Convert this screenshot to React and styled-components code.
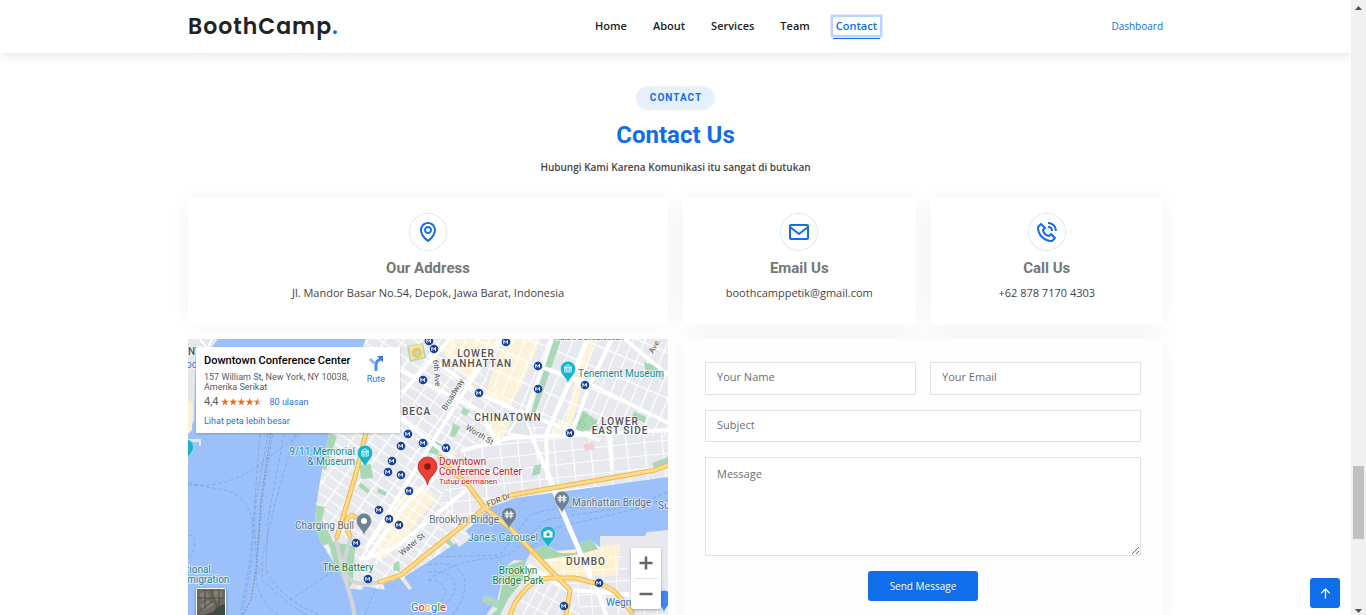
import React from 'react';
import styled, { createGlobalStyle } from 'styled-components';
import { BiMap, BiEnvelope, BiPhoneCall } from 'react-icons/bi';
import { BsArrowUpShort } from 'react-icons/bs';

const GlobalStyle = createGlobalStyle`
  * {
    box-sizing: border-box;
  }

  body {
    margin: 0;
    font-family: "Open Sans", sans-serif;
    color: #444444;
    background: #fff;
  }

  a {
    text-decoration: none;
  }
`;

/**
 * page frame
 *
 */

const Window = styled.div`
  position: relative;
  display: grid;
  grid-template-columns: 1fr 15px;
  height: 100vh;
  overflow: hidden;
`;

const Page = styled.div`
  min-width: 0;
  overflow: hidden;
`;

const Container = styled.div`
  width: 100%;
  max-width: 975px;
  margin: 0 auto;
`;

const ScrollTrack = styled.div`
  display: flex;
  flex-direction: column;
  align-items: center;
  padding: 6px 0 2px;
  background: #f1f1f1;
`;

const ScrollSpace = styled.div`
  flex: ${({ $size }) => $size} 1 0;
`;

const ScrollThumb = styled.div`
  flex: 73 1 0;
  width: 11px;
  background: #c1c1c1;
`;

const BackToTop = styled.a`
  position: absolute;
  right: 26px;
  bottom: 7px;
  display: flex;
  align-items: center;
  justify-content: center;
  width: 30px;
  height: 30px;
  border-radius: 3px;
  color: #fff;
  background: #106eea;
`;

/**
 * header
 *
 */

const Header = styled.header`
  position: relative;
  height: 53px;
  background: #fff;
  box-shadow: 0 0 11px rgba(0, 0, 0, 0.15);
`;

const HeaderInner = styled(Container)`
  display: grid;
  grid-template-columns: 1fr auto 283px;
  align-items: center;
  height: 52px;
`;

const Logo = styled.a`
  padding-top: 2px;
  font-family: Poppins, Inter, sans-serif;
  font-size: 22px;
  font-weight: 600;
  letter-spacing: 1px;
  line-height: 28px;
  color: #222222;

  & > span {
    color: #106eea;
  }
`;

const Nav = styled.nav`
  display: flex;
  gap: 20px;
`;

const NavLink = styled.a`
  position: relative;
  padding: 0 3px;
  font-size: 11px;
  font-weight: 600;
  line-height: 18px;
  color: ${({ $active }) => ($active ? '#106eea' : '#222222')};
  box-shadow: ${({ $active }) => ($active ? '0 0 0 2px #b9d5fa, 0 0 0 3px #e4eefd' : 'none')};

  &::after {
    content: "";
    display: ${({ $active }) => ($active ? 'block' : 'none')};
    position: absolute;
    left: 0;
    right: 0;
    bottom: -4px;
    height: 1px;
    background: #106eea;
  }
`;

const DashboardLink = styled.a`
  justify-self: end;
  font-size: 10px;
  line-height: 16px;
  color: #106eea;
`;

/**
 * section title
 *
 */

const SectionTitle = styled.div`
  display: flex;
  flex-direction: column;
  align-items: center;
  padding: 33px 0 23px;
`;

const Badge = styled.h2`
  margin: 0 0 11px;
  padding: 0 13px 0 14px;
  border-radius: 38px;
  font-family: Roboto, sans-serif;
  font-size: 10px;
  font-weight: 700;
  letter-spacing: 1px;
  line-height: 24px;
  color: #106eea;
  background: #e7f1fd;
`;

const Heading = styled.h3`
  margin: 0 0 10px;
  font-family: Roboto, sans-serif;
  font-size: 24px;
  font-weight: 700;
  line-height: 29px;
  color: #106eea;
`;

const Lead = styled.p`
  margin: 0;
  font-size: 10px;
  font-weight: 600;
  line-height: 15px;
`;

/**
 * contact grid
 *
 */

const Grid = styled.div`
  display: grid;
  grid-template-columns: repeat(4, 1fr);
  gap: 14px 15px;
`;

const InfoBox = styled.article`
  grid-column: span ${({ $span }) => $span};
  display: flex;
  flex-direction: column;
  align-items: center;
  padding: 15px 0 24px;
  background: #fff;
  box-shadow: 0 0 22px rgba(0, 0, 0, 0.05);
`;

const InfoIcon = styled.span`
  display: flex;
  align-items: center;
  justify-content: center;
  width: 38px;
  height: 38px;
  border: 1px dotted #b3d1fa;
  border-radius: 50%;
  color: #106eea;
`;

const InfoTitle = styled.h3`
  margin: 8px 0 7px;
  font-family: Roboto, sans-serif;
  font-size: 15px;
  font-weight: 700;
  line-height: 18px;
  color: #777777;
`;

const InfoText = styled.p`
  margin: 0;
  font-size: 11px;
  line-height: 17px;
`;

/**
 * map
 *
 */

const MapBox = styled.section`
  grid-column: span 2;
  position: relative;
  height: 288px;
  overflow: hidden;
  font-family: Roboto, sans-serif;
`;

const MapCanvas = styled.svg`
  display: block;
  width: 100%;
  height: 100%;
  font-family: Roboto, sans-serif;
`;

const PlaceCard = styled.div`
  position: absolute;
  top: 8px;
  left: 8px;
  display: flex;
  justify-content: space-between;
  width: 204px;
  height: 86px;
  padding: 7px 15px 0 8px;
  background: #fff;
  box-shadow: 0 1px 2px rgba(0, 0, 0, 0.2);
  font-size: 9px;
  line-height: 10px;
  color: #5b5b5b;
`;

const PlaceInfo = styled.div`
  width: 146px;
`;

const PlaceName = styled.strong`
  display: block;
  margin-bottom: 5px;
  font-size: 11px;
  font-weight: 500;
  line-height: 13px;
  white-space: nowrap;
  color: #000;
`;

const Rating = styled.div`
  display: flex;
  align-items: center;
  margin: 3px 0 7px;
  font-size: 11px;
  line-height: 13px;

  & > svg {
    margin: 0 8px 0 2px;
  }
`;

const MapLink = styled.a`
  font-size: 9px;
  line-height: 12px;
  color: #1a73e8;
`;

const Directions = styled.a`
  display: flex;
  flex-direction: column;
  align-items: center;
  gap: 3px;
  padding-top: 2px;
  font-size: 9px;
  line-height: 11px;
  color: #1a73e8;
`;

const ZoomControl = styled.div`
  position: absolute;
  right: 7px;
  bottom: 18px;
  width: 30px;
  padding: 0 3px;
  border-radius: 2px;
  background: #fff;
  box-shadow: 0 1px 3px rgba(0, 0, 0, 0.3);
`;

const ZoomButton = styled.button`
  display: flex;
  align-items: center;
  justify-content: center;
  width: 24px;
  height: 30px;
  padding: 0;
  border: 0;
  background: none;

  & + & {
    height: 31px;
    border-top: 1px solid #e6e6e6;
  }
`;

const SatelliteButton = styled.button`
  position: absolute;
  left: 8px;
  bottom: 9px;
  width: 30px;
  height: 30px;
  padding: 0;
  border: 1px solid #fff;
  border-radius: 2px;
  overflow: hidden;
  background: #3c4a43;
  box-shadow: 0 1px 3px rgba(0, 0, 0, 0.4);
`;

/**
 * form
 *
 */

const Form = styled.form`
  grid-column: span 2;
  display: grid;
  grid-template-columns: 1fr 1fr;
  align-content: start;
  gap: 15px 14px;
  padding: 23px 22px;
  background: #fefefe;
  box-shadow: 0 0 22px rgba(0, 0, 0, 0.05);
`;

const Field = styled.input`
  grid-column: span ${({ $span }) => $span || 1};
  width: 100%;
  height: ${({ $span }) => ($span ? 32 : 33)}px;
  padding: 0 11px 4px;
  border: 1px solid #dee2e6;
  border-radius: 0;
  font-family: "Open Sans", sans-serif;
  font-size: 11px;
  background: #fff;

  &::placeholder {
    color: #6c6f73;
  }
`;

const MessageField = styled.textarea`
  grid-column: span 2;
  display: block;
  height: 99px;
  padding: 7px 11px;
  border: 1px solid #dee2e6;
  border-radius: 0;
  font-family: "Open Sans", sans-serif;
  font-size: 11px;
  line-height: 17px;
  background: #fff;

  &::placeholder {
    color: #6c6f73;
  }
`;

const SendButton = styled.button`
  grid-column: span 2;
  justify-self: center;
  width: 110px;
  height: 30px;
  padding: 0;
  border: 0;
  border-radius: 3px;
  font-family: "Open Sans", sans-serif;
  font-size: 10px;
  color: #fff;
  background: #106eea;
`;

const navItems = ['Home', 'About', 'Services', 'Team', 'Contact'];

const contacts = [
  { title: 'Our Address', text: 'Jl. Mandor Basar No.54, Depok, Jawa Barat, Indonesia', icon: BiMap, span: 2 },
  { title: 'Email Us', text: 'boothcamppetik@gmail.com', icon: BiEnvelope, span: 1 },
  { title: 'Call Us', text: '+62 878 7170 4303', icon: BiPhoneCall, span: 1 },
];

const stations = [
  [423, 380], [408, 434], [401, 446], [423, 443], [392, 461], [388, 472], [401, 475],
  [434, 349], [429, 341], [506, 342], [538, 366], [585, 385], [538, 389], [479, 393],
  [570, 433], [446, 448], [409, 491], [379, 510], [389, 519], [399, 525], [356, 543],
  [368, 579], [599, 583], [564, 606],
];

const whiteRoads = [
  'M428 355L478 393L521 413L600 440',
  'M500 339L474 376L440 430L405 486L366 548',
  'M538 366L588 383L668 423',
  'M588 339L575 371L546 435L548 480',
  'M461 451L508 438L571 435L668 430',
  'M525 421L552 484',
  'M400 418L440 449L470 470',
  'M400 370L478 410L500 445',
  'M440 470L405 505L366 560',
  'M360 560L395 548L470 487',
  'M525 418L552 339',
  'M403 392L450 339',
  'M571 435L590 384L612 339',
  'M625 339L640 352L668 375',
  'M610 432L612 470',
  'M570 590L600 592L668 600',
  'M528 565L570 592',
  'M595 582L606 615',
];

const ferries = [
  'M188 485C215 488 240 478 252 470L300 434',
  'M268 434L256 500L252 560L240 627',
  'M273 434L262 500L256 580C262 610 280 617 300 627',
  'M284 434L268 520L266 570C280 600 310 612 350 627',
  'M295 434L276 500L262 560L262 580C290 605 300 615 335 627',
  'M290 600L332 572M188 483L228 491C250 498 256 520 256 560',
  'M188 535C200 535 194 555 188 556M260 434L250 560L238 627',
  'M428 580C470 550 500 565 515 550L545 520L668 500',
  'M428 557L500 555L530 515C570 500 620 515 668 492',
  'M428 565C475 555 475 600 440 627M428 572C464 568 464 600 428 615M360 627L375 590',
  'M428 580C452 580 450 605 428 605M470 627L505 590M530 548L555 528L640 508',
];

const manhattan = `M366 339L345 395L329 433L321 475L316 507L315 526L321 542L335 565L348 588
  L362 590L364 586L385 590L383 584L400 578L409 590L412 588L404 577L428 562L456 543L459 547L466 542
  L471 537L466 531L491 507L515 498L581 489L668 477V339Z`;

const brooklyn = `M478 627L497 600L506 566L514 560L526 561L531 552L545 545L560 552L575 553L581 542L591 540
  L600 547V536H645L647 532L668 530V627Z`;

const StationMark = ({ x, y }) => (
  <g transform={`translate(${x} ${y})`}>
    <circle r="4.3" fill="#1a43a0" />
    <path d="M-2.2 1.8V-1.6L-.3 .6L1.4 -1.6V1.8" fill="none" stroke="#fff" strokeWidth="1" />
  </g>
);

const Pin = ({ x, y, color, children }) => (
  <g transform={`translate(${x} ${y})`}>
    <path
      d="M0 14.5C-1.2 8.5-7.5 6-7.5-.3A7.5 7.5 0 0 1 7.5-.3C7.5 6 1.2 8.5 0 14.5Z"
      fill={color}
      stroke="#fff"
      strokeOpacity="0.5"
      strokeWidth="0.7"
    />
    {children}
  </g>
);

const MuseumGlyph = () => (
  <path d="M-4-1.6L0-4.4L4-1.6ZM-3.2-1H3.2V3H-3.2ZM-1.600 2V0L0 1.5L1.600 0V2" fill="none" stroke="#fff" strokeWidth="0.9" />
);

const BridgeGlyph = () => (
  <path d="M-2-4V3.6M2-4V3.6M-4.5-2Q-2 0-2-3Q0 1 2-3Q2 0 4.5-2M-4.5 1H4.5" fill="none" stroke="#fff" strokeWidth="1.2" />
);

const Label = ({ x, y, size = 10, color = '#4e5156', anchor = 'start', spacing = 0, weight = 400, rotate = 0, children }) => (
  <text
    x={x}
    y={y}
    fontSize={size}
    fontWeight={weight}
    textAnchor={anchor}
    letterSpacing={spacing}
    transform={rotate ? `rotate(${rotate} ${x} ${y})` : undefined}
    fill={color}
    stroke="#fff"
    strokeOpacity="0.6"
    strokeWidth="2"
    strokeLinejoin="round"
    paintOrder="stroke"
  >
    {children}
  </text>
);

const CityMap = () => (
  <MapCanvas viewBox="188 339 480 288" preserveAspectRatio="xMidYMid slice" role="img" aria-label="Map">
    <defs>
      <pattern id="west" width="15" height="10" patternUnits="userSpaceOnUse" patternTransform="rotate(35)">
        <path d="M0 0H15M0 0V10" stroke="#fff" strokeWidth="2.6" />
      </pattern>
      <pattern id="east" width="11" height="21" patternUnits="userSpaceOnUse" patternTransform="rotate(23)">
        <path d="M0 0H11M0 0V21" stroke="#fff" strokeWidth="2.4" />
      </pattern>
      <pattern id="south" width="18" height="13" patternUnits="userSpaceOnUse" patternTransform="rotate(-6)">
        <path d="M0 0H18M0 0V13" stroke="#fff" strokeWidth="2.2" />
      </pattern>
      <pattern id="dumbo" width="13" height="12" patternUnits="userSpaceOnUse" patternTransform="rotate(-3)">
        <path d="M0 0H13M0 0V12" stroke="#fff" strokeWidth="2" />
      </pattern>
      <pattern id="heights" width="10" height="15" patternUnits="userSpaceOnUse" patternTransform="rotate(28)">
        <path d="M0 0H10M0 0V15" stroke="#fff" strokeWidth="2" />
      </pattern>
      <clipPath id="land"><path d={manhattan} /></clipPath>
      <clipPath id="landEast"><path d={brooklyn} /></clipPath>
    </defs>

    <rect x="188" y="339" width="480" height="288" fill="#9cc0f9" />

    {/* west bank */}
    <path d="M188 339H218L212 347L196 350L194 420L188 434Z" fill="#e5e7eb" />
    <path d="M188 400L193 404L192 430L188 434Z" fill="#fdf0d3" />
    <path d="M188 439H201V446H199V442H188Z" fill="#e5e7eb" />
    <path d="M200 339L206 347M212 339L208 347" stroke="#fff" strokeWidth="2" />

    <g fill="none" stroke="#79a5ea" strokeWidth="0.8" strokeDasharray="4 2">
      {ferries.map(d => <path key={d} d={d} />)}
    </g>
    <path d="M271 433L261 500L256 570L251 600L236 627" fill="none" stroke="#77818f" strokeDasharray="2 1.5" strokeWidth="0.8" />

    {/* lower manhattan */}
    <path d={manhattan} fill="#e7e9ee" />
    <g clipPath="url(#land)">
      <path d="M446 339H500L484 362L470 380L440 350ZM505 339H540L522 385L508 408L484 396Z" fill="#fdf3d9" />
      <path d="M486 412L512 418L502 440L490 444ZM404 496L424 484L436 498L400 544L380 562L372 548Z" fill="#fdf3d9" />
      <path d="M560 420L572 425L568 437L546 437ZM585 339H595L568 440L562 436Z" fill="#fdf3d9" />
      <path d="M300 339H450L520 415L462 452L420 440L380 560H300Z" fill="url(#west)" />
      <path d="M446 339H668V436L571 435L520 415Z" fill="url(#east)" />
      <path d="M462 452L520 420L571 435L668 432V490L470 540L440 500Z" fill="url(#south)" />
      <path d="M420 440L462 452L440 500L470 530L420 590H345Z" fill="url(#west)" />
      <g fill="#a8d8b4">
        <path d="M553 339L561 340L535 414L528 423ZM407 346L423 343L426 358L410 362Z" />
        <path d="M576 413L584 411L598 421L590 430L571 434ZM644 362L661 368L664 380L645 370ZM634 411L646 417L645 423L632 417Z" />
        <path d="M428 438L442 444L438 455L426 452ZM453 423L460 427L455 437L450 436ZM463 407L470 411L466 416L461 413ZM534 466L541 464L540 474L532 476Z" />
        <path d="M329 433L337 436L326 470L322 469ZM315 505L325 507L322 520L333 541L321 547L314 525ZM328 541L355 546L353 582L348 590L335 567Z" />
        <path d="M361 483L370 490L368 494L358 486ZM378 488L387 492L385 496L377 492ZM652 463L668 457V466L655 470ZM448 538L458 549L454 551L445 541ZM394 563L399 561L400 572L393 570Z" />
        <path d="M359 465L371 464L373 478L361 479Z" />
      </g>
      <path d="M409 346L422 344L424 357L411 360Z" fill="#fbe2a0" />
      <circle cx="417" cy="353" r="4" fill="#b9dcb0" stroke="#f6bf51" strokeWidth="2" />
      <path d="M583 445L592 442L595 449L585 451Z" fill="#f8cbd0" />
      <path d="M438 456L462 454L488 477L482 488L440 478Z" fill="#fbdcdc" />
      <g fill="none" stroke="#fff" strokeWidth="4">
        {whiteRoads.map(d => <path key={d} d={d} />)}
      </g>
      <path d="M508 434L522 411L533 437Z" fill="#e4e6eb" stroke="#fff" strokeWidth="2" />
      <path d="M578 424C582 417 588 424 584 427S577 421 587 415M590 420L598 425" fill="none" stroke="#8bc39b" strokeWidth="0.8" />
    </g>

    {/* brooklyn */}
    <path d={brooklyn} fill="#e7e9ee" />
    <path d="M483 595L502 601L499 609L482 602Z" fill="#b0d5c2" />
    <path d="M532 553L581 549L620 544L618 576L545 575Z" fill="#fdf1d0" />
    <g clipPath="url(#landEast)">
      <path d="M532 553L620 546L630 580L668 585V627H590L570 588Z" fill="url(#dumbo)" />
      <path d="M545 581L570 590L585 627H505L520 600Z" fill="url(#heights)" />
      <path d="M497 610L506 566L526 560L523 580L508 599L494 627H475ZM531 553L545 545L560 553L575 553L582 541L592 540L598 549L580 554L540 560Z" fill="#a5d6b1" />
      <g fill="none" stroke="#fff" strokeWidth="4">
        {whiteRoads.slice(-3).map(d => <path key={d} d={d} />)}
      </g>
    </g>

    {/* highways */}
    <g fill="none" strokeLinejoin="round" strokeLinecap="round">
      <path d="M548 474L561 508L591 578L600 595" stroke="#fff" strokeWidth="5" />
      <path d="M336 540L341 562L345 578L352 602L357 627M350 540L343 565C345 580 355 587 379 582" stroke="#d3d5da" strokeWidth="4" />
      {[['#f0b64b', 5], ['#fcdc88', 3]].map(([color, width]) => (
        <g key={color} stroke={color} strokeWidth={width}>
          <path d="M375 395L366 433L355 477L337 537" />
          <path d="M355 517C352 512 344 518 347 528L350 536" />
          <path d="M380 582L401 575L428 553L485 508L500 499L512 495L581 483L628 475L655 470L668 465" />
          <path d="M440 457L450 469L468 485L485 508L510 528L553 573L570 590L564 627" />
          <path d="M505 627L515 603C525 588 535 578 550 578L575 578L603 585C618 590 622 602 632 612" />
        </g>
      ))}
    </g>

    {stations.map(([x, y]) => <StationMark key={`${x}-${y}`} x={x} y={y} />)}

    <Label x={476} y={357} anchor="middle" weight={500} spacing={1}>LOWER</Label>
    <Label x={477} y={367} anchor="middle" weight={500} spacing={1}>MANHATTAN</Label>
    <Label x={508} y={421} anchor="middle" weight={500} spacing={1}>CHINATOWN</Label>
    <Label x={620} y={425} anchor="middle" weight={500} spacing={1}>LOWER</Label>
    <Label x={620} y={434} anchor="middle" weight={500} spacing={1}>EAST SIDE</Label>
    <Label x={402} y={415} weight={500} spacing={1}>BECA</Label>
    <Label x={586} y={565} anchor="middle" weight={500} spacing={1}>DUMBO</Label>
    <Label x={433} y={360} size={8} rotate={85}>6th Ave</Label>
    <Label x={446} y={411} size={8} rotate={-59}>Broadway</Label>
    <Label x={465} y={429} size={8} rotate={31}>Worth St</Label>
    <Label x={402} y={556} size={8} rotate={-40}>Water St</Label>
    <Label x={488} y={507} size={8} rotate={-22}>FDR Dr</Label>
    <Label x={653} y={354} size={8} rotate={-60}>Ave.</Label>
    <Label x={555} y={340} size={8}>Katz&apos;s Delicatessen</Label>
    <Label x={186} y={368} color="#2f73d8">od</Label>
    <Label x={188} y={355} weight={500}>NT</Label>

    <Label x={578} y={377} color="#168a99">Tenement Museum</Label>
    <Label x={355} y={455} anchor="end" color="#168a99">9/11 Memorial</Label>
    <Label x={355} y={465} anchor="end" color="#168a99">&amp; Museum</Label>
    <Label x={538} y={541} anchor="end" color="#168a99">Jane&apos;s Carousel</Label>
    <Label x={186} y={573} color="#168a99">tional</Label>
    <Label x={187} y={583} color="#168a99">migration</Label>
    <Label x={354} y={529} anchor="end" color="#5b7083">Charging Bull</Label>
    <Label x={499} y={523} anchor="end" color="#5b7083">Brooklyn Bridge</Label>
    <Label x={572} y={506} color="#5b7083">Manhattan Bridge</Label>
    <Label x={658} y={509} color="#3569be">Su</Label>
    <Label x={606} y={606} color="#2f73d8">Wegmans</Label>
    <Label x={348} y={571} anchor="middle" color="#23813f">The Battery</Label>
    <Label x={518} y={574} anchor="middle" color="#23813f">Brooklyn</Label>
    <Label x={518} y={584} anchor="middle" color="#23813f">Bridge Park</Label>
    <Label x={439} y={465} color="#c5221f">Downtown</Label>
    <Label x={439} y={475} color="#c5221f">Conference Center</Label>
    <Label x={439} y={484} size={8} color="#c5221f">Tutup permanen</Label>

    <Pin x={568} y={369} color="#12b5cb"><MuseumGlyph /></Pin>
    <Pin x={365} y={453} color="#12b5cb"><MuseumGlyph /></Pin>
    <Pin x={186} y={447} color="#12b5cb" />
    <Pin x={548} y={534} color="#12b5cb">
      <path d="M-4.5-2.5H-2L-1-4H2L3-2.5H4.5V3.5H-4.5Z" fill="#fff" />
      <circle cy=".4" r="1.8" fill="#12b5cb" />
    </Pin>
    <Pin x={562} y={499} color="#6d8393"><BridgeGlyph /></Pin>
    <Pin x={509} y={515} color="#6d8393"><BridgeGlyph /></Pin>
    <Pin x={364} y={521} color="#6d8393"><circle r="3" fill="#fff" /></Pin>
    <Pin x={664} y={598} color="#4285f4" />
    <path d="M427.500 485C426 476 418 474 418 466.500A9.500 9.500 0 0 1 437 466.500C437 474 429 476 427.500 485Z" fill="#ea4335" stroke="#b31412" strokeWidth="0.7" />
    <circle cx="427.500" cy="466.500" r="3.200" fill="#8c1510" />

    <text x="411" y="611" fontSize="11" fontWeight="500" stroke="#fff" strokeWidth="2" paintOrder="stroke">
      <tspan fill="#4285f4">G</tspan>
      <tspan fill="#ea4335">o</tspan>
      <tspan fill="#fbbc04">o</tspan>
      <tspan fill="#4285f4">g</tspan>
      <tspan fill="#34a853">l</tspan>
      <tspan fill="#ea4335">e</tspan>
    </text>
  </MapCanvas>
);

const Stars = () => (
  <svg width="41" height="8" viewBox="0 0 41 8" aria-hidden="true">
    {[0, 1, 2, 3, 4].map(i => (
      <path
        key={i}
        transform={`translate(${i * 8.2} 0)`}
        d="M4 0L5 2.800H8L5.600 4.600L6.500 7.600L4 5.800L1.500 7.600L2.400 4.600L0 2.800H3Z"
        fill={i === 4 ? '#c9c9c9' : '#e7711b'}
      />
    ))}
    <path transform="translate(32.8 0)" d="M4 0V5.800L1.500 7.600L2.400 4.600L0 2.800H3Z" fill="#e7711b" />
  </svg>
);

const Map = () => (
  <MapBox>
    <CityMap />

    <PlaceCard>
      <PlaceInfo>
        <PlaceName>Downtown Conference Center</PlaceName>
        157 William St, New York, NY 10038, Amerika Serikat
        <Rating>
          4,4
          <Stars />
          <MapLink href="#reviews">80 ulasan</MapLink>
        </Rating>
        <MapLink href="#map">Lihat peta lebih besar</MapLink>
      </PlaceInfo>

      <Directions href="#route">
        <svg width="14" height="15" viewBox="0 0 14 15" aria-hidden="true">
          <path d="M7 15V9C7 6 9 4 12 3" fill="none" stroke="#4f8df0" strokeWidth="3" />
          <path d="M1 3L5.500 7.500" stroke="#8db4f5" strokeWidth="3" />
          <path d="M8 0H14V6Z" fill="#3b78d8" />
        </svg>
        Rute
      </Directions>
    </PlaceCard>

    <SatelliteButton type="button" aria-label="Satellite">
      <svg width="28" height="28" viewBox="0 0 28 28" aria-hidden="true">
        <path d="M0 0H28V15L20 18L16 23L0 28Z" fill="#6d6860" />
        <path d="M2 5L9 2L13 8L5 12ZM15 3L24 1L26 9L18 12ZM3 16L11 11L17 16L7 22Z" fill="#857e73" />
        <path d="M0 9H28M8 0V20M14 0L20 18M0 24L16 12M22 0V17" stroke="#4b4a45" />
      </svg>
    </SatelliteButton>

    <ZoomControl>
      <ZoomButton type="button" aria-label="Zoom in">
        <svg width="14" height="14" viewBox="0 0 14 14">
          <path d="M7 0.500V13.500M0.500 7H13.500" stroke="#666" strokeWidth="2.500" />
        </svg>
      </ZoomButton>
      <ZoomButton type="button" aria-label="Zoom out">
        <svg width="14" height="14" viewBox="0 0 14 14">
          <path d="M0.500 7H13.500" stroke="#666" strokeWidth="2.500" />
        </svg>
      </ZoomButton>
    </ZoomControl>
  </MapBox>
);

const ContactForm = () => (
  <Form>
    <Field type="text" placeholder="Your Name" aria-label="Your Name" />
    <Field type="email" placeholder="Your Email" aria-label="Your Email" />
    <Field type="text" placeholder="Subject" aria-label="Subject" $span={2} />
    <MessageField placeholder="Message" aria-label="Message" />
    <SendButton type="submit">Send Message</SendButton>
  </Form>
);

const ScrollBar = () => (
  <ScrollTrack>
    <svg width="7" height="4" viewBox="0 0 7 4"><path d="M0 4L3.500 0L7 4Z" fill="#505050" /></svg>
    <ScrollSpace $size={456} />
    <ScrollThumb />
    <ScrollSpace $size={70} />
    <svg width="7" height="4" viewBox="0 0 7 4"><path d="M0 0L3.500 4L7 0Z" fill="#505050" /></svg>
  </ScrollTrack>
);

const App = () => (
  <Window>
    <GlobalStyle />

    <Page>
      <Header>
        <HeaderInner>
          <Logo href="#home">BoothCamp<span>.</span></Logo>

          <Nav>
            {navItems.map(item => (
              <NavLink key={item} href={`#${item.toLowerCase()}`} $active={item === 'Contact'}>
                {item}
              </NavLink>
            ))}
          </Nav>

          <DashboardLink href="#dashboard">Dashboard</DashboardLink>
        </HeaderInner>
      </Header>

      <Container as="main">
        <SectionTitle>
          <Badge>CONTACT</Badge>
          <Heading>Contact Us</Heading>
          <Lead>Hubungi Kami Karena Komunikasi itu sangat di butukan</Lead>
        </SectionTitle>

        <Grid>
          {contacts.map(({ title, text, icon: Icon, span }) => (
            <InfoBox key={title} $span={span}>
              <InfoIcon><Icon size={24} /></InfoIcon>
              <InfoTitle>{title}</InfoTitle>
              <InfoText>{text}</InfoText>
            </InfoBox>
          ))}

          <Map />
          <ContactForm />
        </Grid>
      </Container>
    </Page>

    <ScrollBar />

    <BackToTop href="#home" aria-label="Back to top">
      <BsArrowUpShort size={21} />
    </BackToTop>
  </Window>
);

export default App;
